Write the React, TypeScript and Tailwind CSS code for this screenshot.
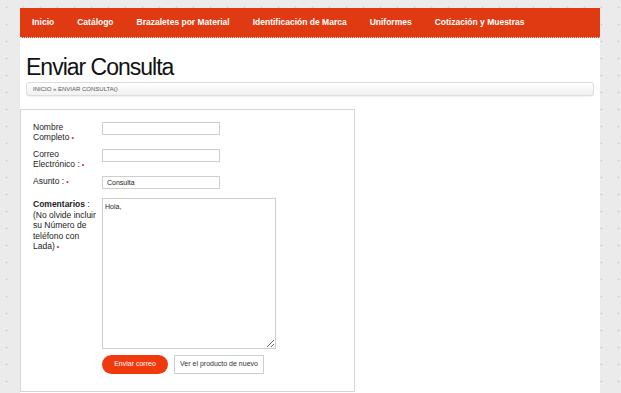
import React from "react";

const navItems = [
  "Inicio",
  "Catálogo",
  "Brazaletes por Material",
  "Identificación de Marca",
  "Uniformes",
  "Cotización y Muestras",
];

function Req() {
  return <span className="text-[#e0241b] text-[7px] leading-none ml-[2px]">•</span>;
}

export default function App() {
  return (
    <div
      className="min-h-screen w-full bg-[#ebebeb] bg-[radial-gradient(circle,#d2d2d2_0.8px,transparent_1.2px)] bg-[length:17px_17px] bg-[position:-2px_-1px] pt-[8px] pl-[20px] pr-[21px] text-[#111]"
      style={{ fontFamily: '"Liberation Sans", Arial, sans-serif' }}
    >
      <div className="bg-white min-h-[385px] flex flex-col">
        <nav className="h-[30px] bg-[#e03a12] flex items-center pl-[12px] gap-[23px] border-b border-dotted border-[#d8d8d8]">
          {navItems.map((n) => (
            <span key={n} className="text-white font-bold text-[8.5px]">
              {n}
            </span>
          ))}
        </nav>
        <div className="h-[2px]" />
        <h1 className="mx-[6px] mt-[14px] text-[23px] leading-[26px] tracking-[-1px] text-[#111]">
          Enviar Consulta
        </h1>
        <div className="mx-[6px] mt-[2px] h-[14px] rounded-[3px] border border-[#dcdcdc] bg-gradient-to-b from-[#ffffff] to-[#f1f1f1] flex items-center pl-[6px] shadow-[0_1px_1px_rgba(0,0,0,0.06)]">
          <span className="text-[6px] text-[#555] uppercase">Inicio » Enviar Consulta()</span>
        </div>
        <div className="mt-[13px] w-[335px] border border-[#d6d6d6] pt-[12px] pl-[12px] pb-[17px] flex flex-col">
          <div className="flex h-[20px]">
            <div className="w-[69px] text-[8.5px] leading-[10px] text-[#222]">
              Nombre
              <br />
              Completo
              <Req />
            </div>
            <input className="w-[118px] h-[13px] border border-[#cfcfcf] outline-none" />
          </div>
          <div className="flex h-[20px] mt-[7px]">
            <div className="w-[69px] text-[8.5px] leading-[10px] text-[#222]">
              Correo
              <br />
              Electrónico :<Req />
            </div>
            <input className="w-[118px] h-[13px] border border-[#cfcfcf] outline-none" />
          </div>
          <div className="flex h-[13px] mt-[7px]">
            <div className="w-[69px] text-[8.5px] leading-[10px] text-[#222]">
              Asunto :<Req />
            </div>
            <input
              defaultValue="Consulta"
              className="w-[118px] h-[13px] border border-[#cfcfcf] pl-[4px] text-[7px] text-[#222] outline-none"
            />
          </div>
          <div className="flex mt-[9px]">
            <div className="w-[69px] text-[8.5px] leading-[10.5px] text-[#222] pt-[1px]">
              <span className="font-bold">Comentarios</span> : (No olvide incluir su Número de teléfono con Lada)
              <Req />
            </div>
            <textarea
              defaultValue="Hola,"
              className="w-[174px] h-[151px] border border-[#cfcfcf] p-[2px] pt-[3px] text-[7px] leading-[9px] text-[#222] outline-none resize-y"
            />
          </div>
          <div className="flex ml-[69px] mt-[6px] gap-[6px] items-center">
            <button className="h-[19px] w-[66px] rounded-full bg-[#f03a0e] text-white text-[7px]">
              Enviar correo
            </button>
            <button className="h-[19px] w-[90px] border border-[#cfcfcf] bg-white text-[#333] text-[7px]">
              Ver el producto de nuevo
            </button>
          </div>
        </div>
      </div>
    </div>
  );
}
